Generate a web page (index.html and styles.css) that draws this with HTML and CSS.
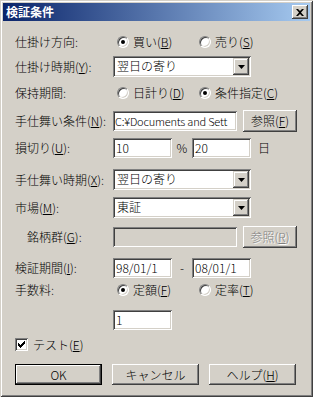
FILE: index.html
```html
<!DOCTYPE html>
<html lang="ja">
<head>
    <meta charset="UTF-8">
    <title>検証条件</title>
    <link rel="stylesheet" href="styles.css">
</head>
<body>
    <div class="window">
        <!-- Title bar -->
        <div class="titlebar">
            <span class="title">検証条件</span>
            <span class="close">
                <svg width="8" height="7" viewBox="0 0 8 7"><path d="M0 0h2l2 2 2-2h2L5 3.5 8 7H6L4 5 2 7H0l3-3.5z"/></svg>
            </span>
        </div>

        <div class="client">
            <div class="row row-dir">
                <span class="lbl">仕掛け方向:</span>
                <div class="radios">
                    <span class="radio on"><i></i>買い(<u>B</u>)</span>
                    <span class="radio"><i></i>売り(<u>S</u>)</span>
                </div>
            </div>

            <div class="row row-entry">
                <span class="lbl">仕掛け時期(<u>Y</u>):</span>
                <div class="combo">
                    <span class="combo-text">翌日の寄り</span>
                    <span class="combo-btn"><svg width="7" height="4" viewBox="0 0 7 4"><path d="M0 0h7L3.5 4z"/></svg></span>
                </div>
            </div>

            <div class="row row-hold">
                <span class="lbl">保持期間:</span>
                <div class="radios">
                    <span class="radio"><i></i>日計り(<u>D</u>)</span>
                    <span class="radio on"><i></i>条件指定(<u>C</u>)</span>
                </div>
            </div>

            <div class="row row-exit">
                <span class="lbl">手仕舞い条件(<u>N</u>):</span>
                <div class="edit long path">C:¥Documents and Sett</div>
                <span class="btn small">参照(<u>F</u>)</span>
            </div>

            <div class="row row-stop">
                <span class="lbl">損切り(<u>U</u>):</span>
                <div class="edit short">10</div>
                <span class="sep">%</span>
                <div class="edit short">20</div>
                <span class="unit">日</span>
            </div>

            <div class="row row-exittime">
                <span class="lbl">手仕舞い時期(<u>X</u>):</span>
                <div class="combo">
                    <span class="combo-text">翌日の寄り</span>
                    <span class="combo-btn"><svg width="7" height="4" viewBox="0 0 7 4"><path d="M0 0h7L3.5 4z"/></svg></span>
                </div>
            </div>

            <div class="row row-market">
                <span class="lbl">市場(<u>M</u>):</span>
                <div class="combo">
                    <span class="combo-text">東証</span>
                    <span class="combo-btn"><svg width="7" height="4" viewBox="0 0 7 4"><path d="M0 0h7L3.5 4z"/></svg></span>
                </div>
            </div>

            <div class="row row-group">
                <span class="lbl indent">銘柄群(<u>G</u>):</span>
                <div class="edit long disabled"></div>
                <span class="btn small disabled">参照(<u>R</u>)</span>
            </div>

            <div class="row row-period">
                <span class="lbl">検証期間(<u>I</u>):</span>
                <div class="edit short">98/01/1</div>
                <span class="sep">-</span>
                <div class="edit short">08/01/1</div>
            </div>

            <div class="row row-fee">
                <span class="lbl">手数料:</span>
                <div class="radios">
                    <span class="radio on"><i></i>定額(<u>F</u>)</span>
                    <span class="radio"><i></i>定率(<u>T</u>)</span>
                </div>
            </div>

            <div class="row row-feeval">
                <span class="lbl"></span>
                <div class="edit short">1</div>
            </div>

            <div class="row row-test">
                <span class="check">
                    <svg width="7" height="7" viewBox="0 0 7 7"><path d="M0 2h1v1h1v1h1v-1h1v-1h1v-1h1v-1h1v3h-1v1h-1v1h-1v1h-1v1h-1v-1h-1v-1h-1v-1h-1z"/></svg>
                </span>
                <span class="check-text">テスト(<u>E</u>)</span>
            </div>

            <div class="row row-buttons">
                <span class="btn wide default">OK</span>
                <span class="btn wide">キャンセル</span>
                <span class="btn wide">ヘルプ(<u>H</u>)</span>
            </div>
        </div>
    </div>
</body>
</html>
```

FILE: styles.css
```css
* {
    box-sizing: border-box;
}

body {
    margin: 0;
    background: #d4d0c8;
    font-family: "Noto Sans CJK JP", "DejaVu Sans", sans-serif;
    font-size: 12px;
    font-weight: 300;
    line-height: 14px;
    color: #000;
}

u {
    text-decoration: underline;
    text-underline-offset: 1px;
}

.window {
    width: 313px;
    height: 397px;
    padding: 3px;
    background: #d4d0c8;
    box-shadow: inset 1px 1px #d4d0c8, inset -1px -1px #404040,
                inset 2px 2px #fff, inset -2px -2px #808080;
    overflow: hidden;
}

/* title bar */
.titlebar {
    display: flex;
    align-items: center;
    justify-content: space-between;
    height: 18px;
    padding: 0 2px 0 3px;
    background: linear-gradient(to right, #0a246a, #a6caf0);
}

.title {
    color: #fff;
    font-weight: bold;
}

.close {
    display: flex;
    align-items: center;
    justify-content: center;
    width: 16px;
    height: 14px;
    background: #d4d0c8;
    box-shadow: inset -1px -1px #404040, inset 1px 1px #fff,
                inset -2px -2px #808080;
}

/* form rows */
.client {
    padding-left: 12px;
}

.row {
    display: flex;
    align-items: center;
}

.row-dir      { margin-top: 13px; height: 16px; }
.row-entry    { margin-top: 6px;  height: 21px; }
.row-hold     { margin-top: 8px;  height: 16px; }
.row-exit     { margin-top: 9px;  height: 22px; }
.row-stop     { margin-top: 6px;  height: 20px; }
.row-exittime { margin-top: 11px; height: 21px; }
.row-market   { margin-top: 7px;  height: 21px; }
.row-group    { margin-top: 8px;  height: 22px; }
.row-period   { margin-top: 10px; height: 20px; }
.row-fee      { margin-top: 4px;  height: 16px; }
.row-feeval   { margin-top: 12px; height: 20px; }
.row-test     { margin-top: 7px;  height: 15px; }
.row-buttons  { margin-top: 12px; height: 21px; gap: 10px; }

.lbl {
    flex: none;
    width: 98px;
}

.lbl.indent {
    padding-left: 12px;
}

/* radio buttons */
.radios {
    display: flex;
    padding-left: 4px;
}

.radio {
    display: flex;
    align-items: center;
    width: 82px;
}

.radio i {
    position: relative;
    flex: none;
    width: 12px;
    height: 12px;
    margin-right: 4px;
    border-radius: 50%;
    background: #fff;
    border: 1px solid;
    border-color: #808080 #fff #fff #808080;
    box-shadow: inset 1px 1px #404040, inset -1px -1px #d4d0c8;
}

.radio.on i::after {
    content: "";
    position: absolute;
    left: 3px;
    top: 3px;
    width: 4px;
    height: 4px;
    border-radius: 50%;
    background: #000;
}

/* edit boxes */
.edit {
    height: 20px;
    padding: 3px 3px 0;
    background: #fff;
    white-space: nowrap;
    overflow: hidden;
    box-shadow: inset 1px 1px #808080, inset -1px -1px #fff,
                inset 2px 2px #404040, inset -2px -2px #d4d0c8;
}

.edit.short {
    width: 59px;
}

.edit.long {
    width: 124px;
}

.edit.path {
    padding: 3px 0 0 2px;
    font-size: 11px;
    letter-spacing: -0.2px;
}

.edit.disabled {
    background: #d4d0c8;
}

.sep {
    width: 20px;
    text-align: center;
}

.unit {
    margin-left: 7px;
}

/* combo boxes */
.combo {
    display: flex;
    width: 138px;
    height: 21px;
    padding: 2px;
    background: #fff;
    box-shadow: inset 1px 1px #808080, inset -1px -1px #fff,
                inset 2px 2px #404040, inset -2px -2px #d4d0c8;
}

.combo-text {
    flex: 1;
    padding: 1px 0 0 2px;
}

.combo-btn {
    display: flex;
    align-items: center;
    justify-content: center;
    width: 16px;
    background: #d4d0c8;
    box-shadow: inset -1px -1px #404040, inset 1px 1px #d4d0c8,
                inset -2px -2px #808080, inset 2px 2px #fff;
}

/* push buttons */
.btn {
    display: flex;
    align-items: center;
    justify-content: center;
    height: 21px;
    background: #d4d0c8;
    box-shadow: inset -1px -1px #404040, inset 1px 1px #fff,
                inset -2px -2px #808080;
}

.btn.small {
    width: 54px;
    height: 22px;
    margin-left: 6px;
}

.btn.wide {
    width: 87px;
}

.btn.default {
    box-shadow: inset 0 0 0 1px #000, inset -2px -2px #404040,
                inset 2px 2px #fff, inset -3px -3px #808080;
}

.btn.disabled {
    color: #808080;
    text-shadow: 1px 1px #fff;
}

/* checkbox */
.check {
    display: flex;
    align-items: center;
    justify-content: center;
    width: 13px;
    height: 13px;
    margin-right: 5px;
    background: #fff;
    box-shadow: inset 1px 1px #808080, inset -1px -1px #fff,
                inset 2px 2px #404040, inset -2px -2px #d4d0c8;
}
```
